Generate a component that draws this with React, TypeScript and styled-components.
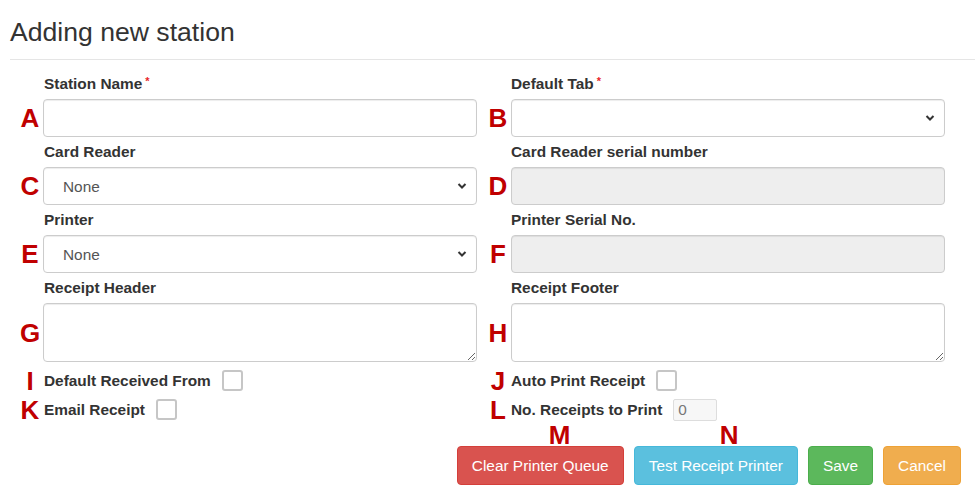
import * as React from 'react';
import styled, { createGlobalStyle, css } from 'styled-components';

const GlobalStyle = createGlobalStyle`
  body {
    margin: 0;
    background: #fff;
    font-family: "Liberation Sans", Arial, sans-serif;
    color: #333;
  }
`;

const Page = styled.div`
  width: 975px;
  height: 496px;
  overflow: hidden;
  padding-left: 10px;
  box-sizing: border-box;
`;

const Header = styled.div`
  padding: 18px 0 12px;
  border-bottom: 1px solid #e5e5e5;
`;

const Title = styled.h3`
  margin: 0;
  font-size: 26.6px;
  line-height: 29px;
  font-weight: 400;
  color: #333;
`;

const Form = styled.div`
  display: grid;
  grid-template-columns: 460px 460px;
  column-gap: 8px;
  margin: 13px 0 0 7px;
`;

const Column = styled.div`
  display: flex;
  flex-direction: column;
`;

const Field = styled.div`
  display: grid;
  grid-template-columns: 26px 434px;
  grid-template-rows: 22px auto;
  row-gap: 4px;
  margin-bottom: 4px;
`;

const Label = styled.label`
  grid-column: 2;
  font-size: 15.4px;
  line-height: 22px;
  font-weight: 700;
  color: #333;
  padding-left: ${(p: { $indent?: number }) => p.$indent ?? 0}px;
`;

const Required = styled.span`
  color: #e8262a;
  font-size: 11px;
  margin-left: 3px;
  position: relative;
  top: -4px;
`;

const Letter = styled.span`
  font-family: "Liberation Sans", Arial, sans-serif;
  font-weight: 700;
  font-size: 26px;
  line-height: 1;
  color: #c00000;
  text-align: center;
  align-self: center;
`;

const controlBase = css`
  box-sizing: border-box;
  display: block;
  width: 100%;
  margin: 0;
  border: 1px solid #ccc;
  border-radius: 4px;
  box-shadow: inset 0 1px 1px rgba(0, 0, 0, 0.075);
  font: 15.4px "Liberation Sans", Arial, sans-serif;
  color: #555;
  background: #fff;
  outline: none;
`;

const TextInput = styled.input`
  ${controlBase};
  height: 38px;
  padding: 0 13px;
  &:disabled {
    background: #eee;
  }
`;

const SelectWrap = styled.div`
  position: relative;
`;

const Select = styled.select`
  ${controlBase};
  height: 38px;
  padding: 0 30px 0 19px;
  appearance: none;
`;

const Chevron = styled.svg`
  position: absolute;
  right: 10px;
  top: 50%;
  transform: translateY(-50%);
  pointer-events: none;
`;

const TextArea = styled.textarea`
  ${controlBase};
  height: 59px;
  padding: 6px 13px;
  resize: vertical;
`;

const CheckRow = styled.div`
  display: grid;
  grid-template-columns: 26px auto;
  align-items: center;
  height: 29px;
`;

const Inline = styled.div`
  display: flex;
  align-items: center;
  gap: 11px;
  padding-left: ${(p: { $indent?: number }) => p.$indent ?? 0}px;
`;

const CheckLabel = styled.span`
  font-size: 15.4px;
  font-weight: 700;
  color: #333;
`;

const CheckBox = styled.input`
  appearance: none;
  box-sizing: border-box;
  width: 21px;
  height: 21px;
  margin: 0;
  border: 2px solid #c6c6c6;
  border-radius: 3px;
  background: #fff;
`;

const NumberBox = styled.input`
  box-sizing: border-box;
  width: 44px;
  height: 22px;
  margin: 0;
  padding: 0 4px;
  border: 1px solid #ddd;
  border-radius: 2px;
  background: #f7f7f7;
  color: #777;
  font: 15.4px "Liberation Sans", Arial, sans-serif;
`;

const ButtonBar = styled.div`
  display: flex;
  justify-content: flex-end;
  gap: 10px;
  margin-top: 22px;
  padding-right: 14px;
`;

const palette = {
  danger: ['#d9534f', '#d43f3a'],
  info: ['#5bc0de', '#46b8da'],
  success: ['#5cb85c', '#4cae4c'],
  warning: ['#f0ad4e', '#eea236'],
};

type Variant = keyof typeof palette;

const Button = styled.button<{ $variant: Variant }>`
  position: relative;
  box-sizing: border-box;
  height: 39px;
  padding: 0 14px;
  border: 1px solid ${(p) => palette[p.$variant][1]};
  border-radius: 4px;
  background: ${(p) => palette[p.$variant][0]};
  color: #fff;
  font: 15.4px "Liberation Sans", Arial, sans-serif;
  white-space: nowrap;
`;

const Mark = styled(Letter)<{ $left: number }>`
  position: absolute;
  top: -25px;
  left: ${(p) => p.$left}px;
`;

const SelectBox: React.FC<{ value?: string }> = ({ value }) => (
  <SelectWrap>
    <Select defaultValue={value ?? ''}>
      <option value={value ?? ''}>{value ?? ''}</option>
    </Select>
    <Chevron width="10" height="7" viewBox="0 0 10 7">
      <path d="M1.5 1.5 L5 5 L8.5 1.5" fill="none" stroke="#333" strokeWidth="2" />
    </Chevron>
  </SelectWrap>
);

const App: React.FC = () => (
  <Page>
    <GlobalStyle />
    <Header>
      <Title>Adding new station</Title>
    </Header>
    <Form>
      <Column>
        <Field>
          <Label $indent={1}>
            Station Name<Required>*</Required>
          </Label>
          <Letter>A</Letter>
          <TextInput />
        </Field>
        <Field>
          <Label $indent={1}>Card Reader</Label>
          <Letter>C</Letter>
          <SelectBox value="None" />
        </Field>
        <Field>
          <Label $indent={1}>Printer</Label>
          <Letter>E</Letter>
          <SelectBox value="None" />
        </Field>
        <Field>
          <Label $indent={1}>Receipt Header</Label>
          <Letter>G</Letter>
          <TextArea />
        </Field>
        <CheckRow>
          <Letter>I</Letter>
          <Inline $indent={1}>
            <CheckLabel>Default Received From</CheckLabel>
            <CheckBox type="checkbox" />
          </Inline>
        </CheckRow>
        <CheckRow>
          <Letter>K</Letter>
          <Inline $indent={1}>
            <CheckLabel>Email Receipt</CheckLabel>
            <CheckBox type="checkbox" />
          </Inline>
        </CheckRow>
      </Column>
      <Column>
        <Field>
          <Label>
            Default Tab<Required>*</Required>
          </Label>
          <Letter>B</Letter>
          <SelectBox />
        </Field>
        <Field>
          <Label>Card Reader serial number</Label>
          <Letter>D</Letter>
          <TextInput disabled />
        </Field>
        <Field>
          <Label>Printer Serial No.</Label>
          <Letter>F</Letter>
          <TextInput disabled />
        </Field>
        <Field>
          <Label>Receipt Footer</Label>
          <Letter>H</Letter>
          <TextArea />
        </Field>
        <CheckRow>
          <Letter>J</Letter>
          <Inline>
            <CheckLabel>Auto Print Receipt</CheckLabel>
            <CheckBox type="checkbox" />
          </Inline>
        </CheckRow>
        <CheckRow>
          <Letter>L</Letter>
          <Inline>
            <CheckLabel>No. Receipts to Print</CheckLabel>
            <NumberBox defaultValue="0" readOnly />
          </Inline>
        </CheckRow>
      </Column>
    </Form>
    <ButtonBar>
      <Button $variant="danger">
        <Mark $left={91}>M</Mark>
        Clear Printer Queue
      </Button>
      <Button $variant="info">
        <Mark $left={85}>N</Mark>
        Test Receipt Printer
      </Button>
      <Button $variant="success">Save</Button>
      <Button $variant="warning">Cancel</Button>
    </ButtonBar>
  </Page>
);

export default App;
